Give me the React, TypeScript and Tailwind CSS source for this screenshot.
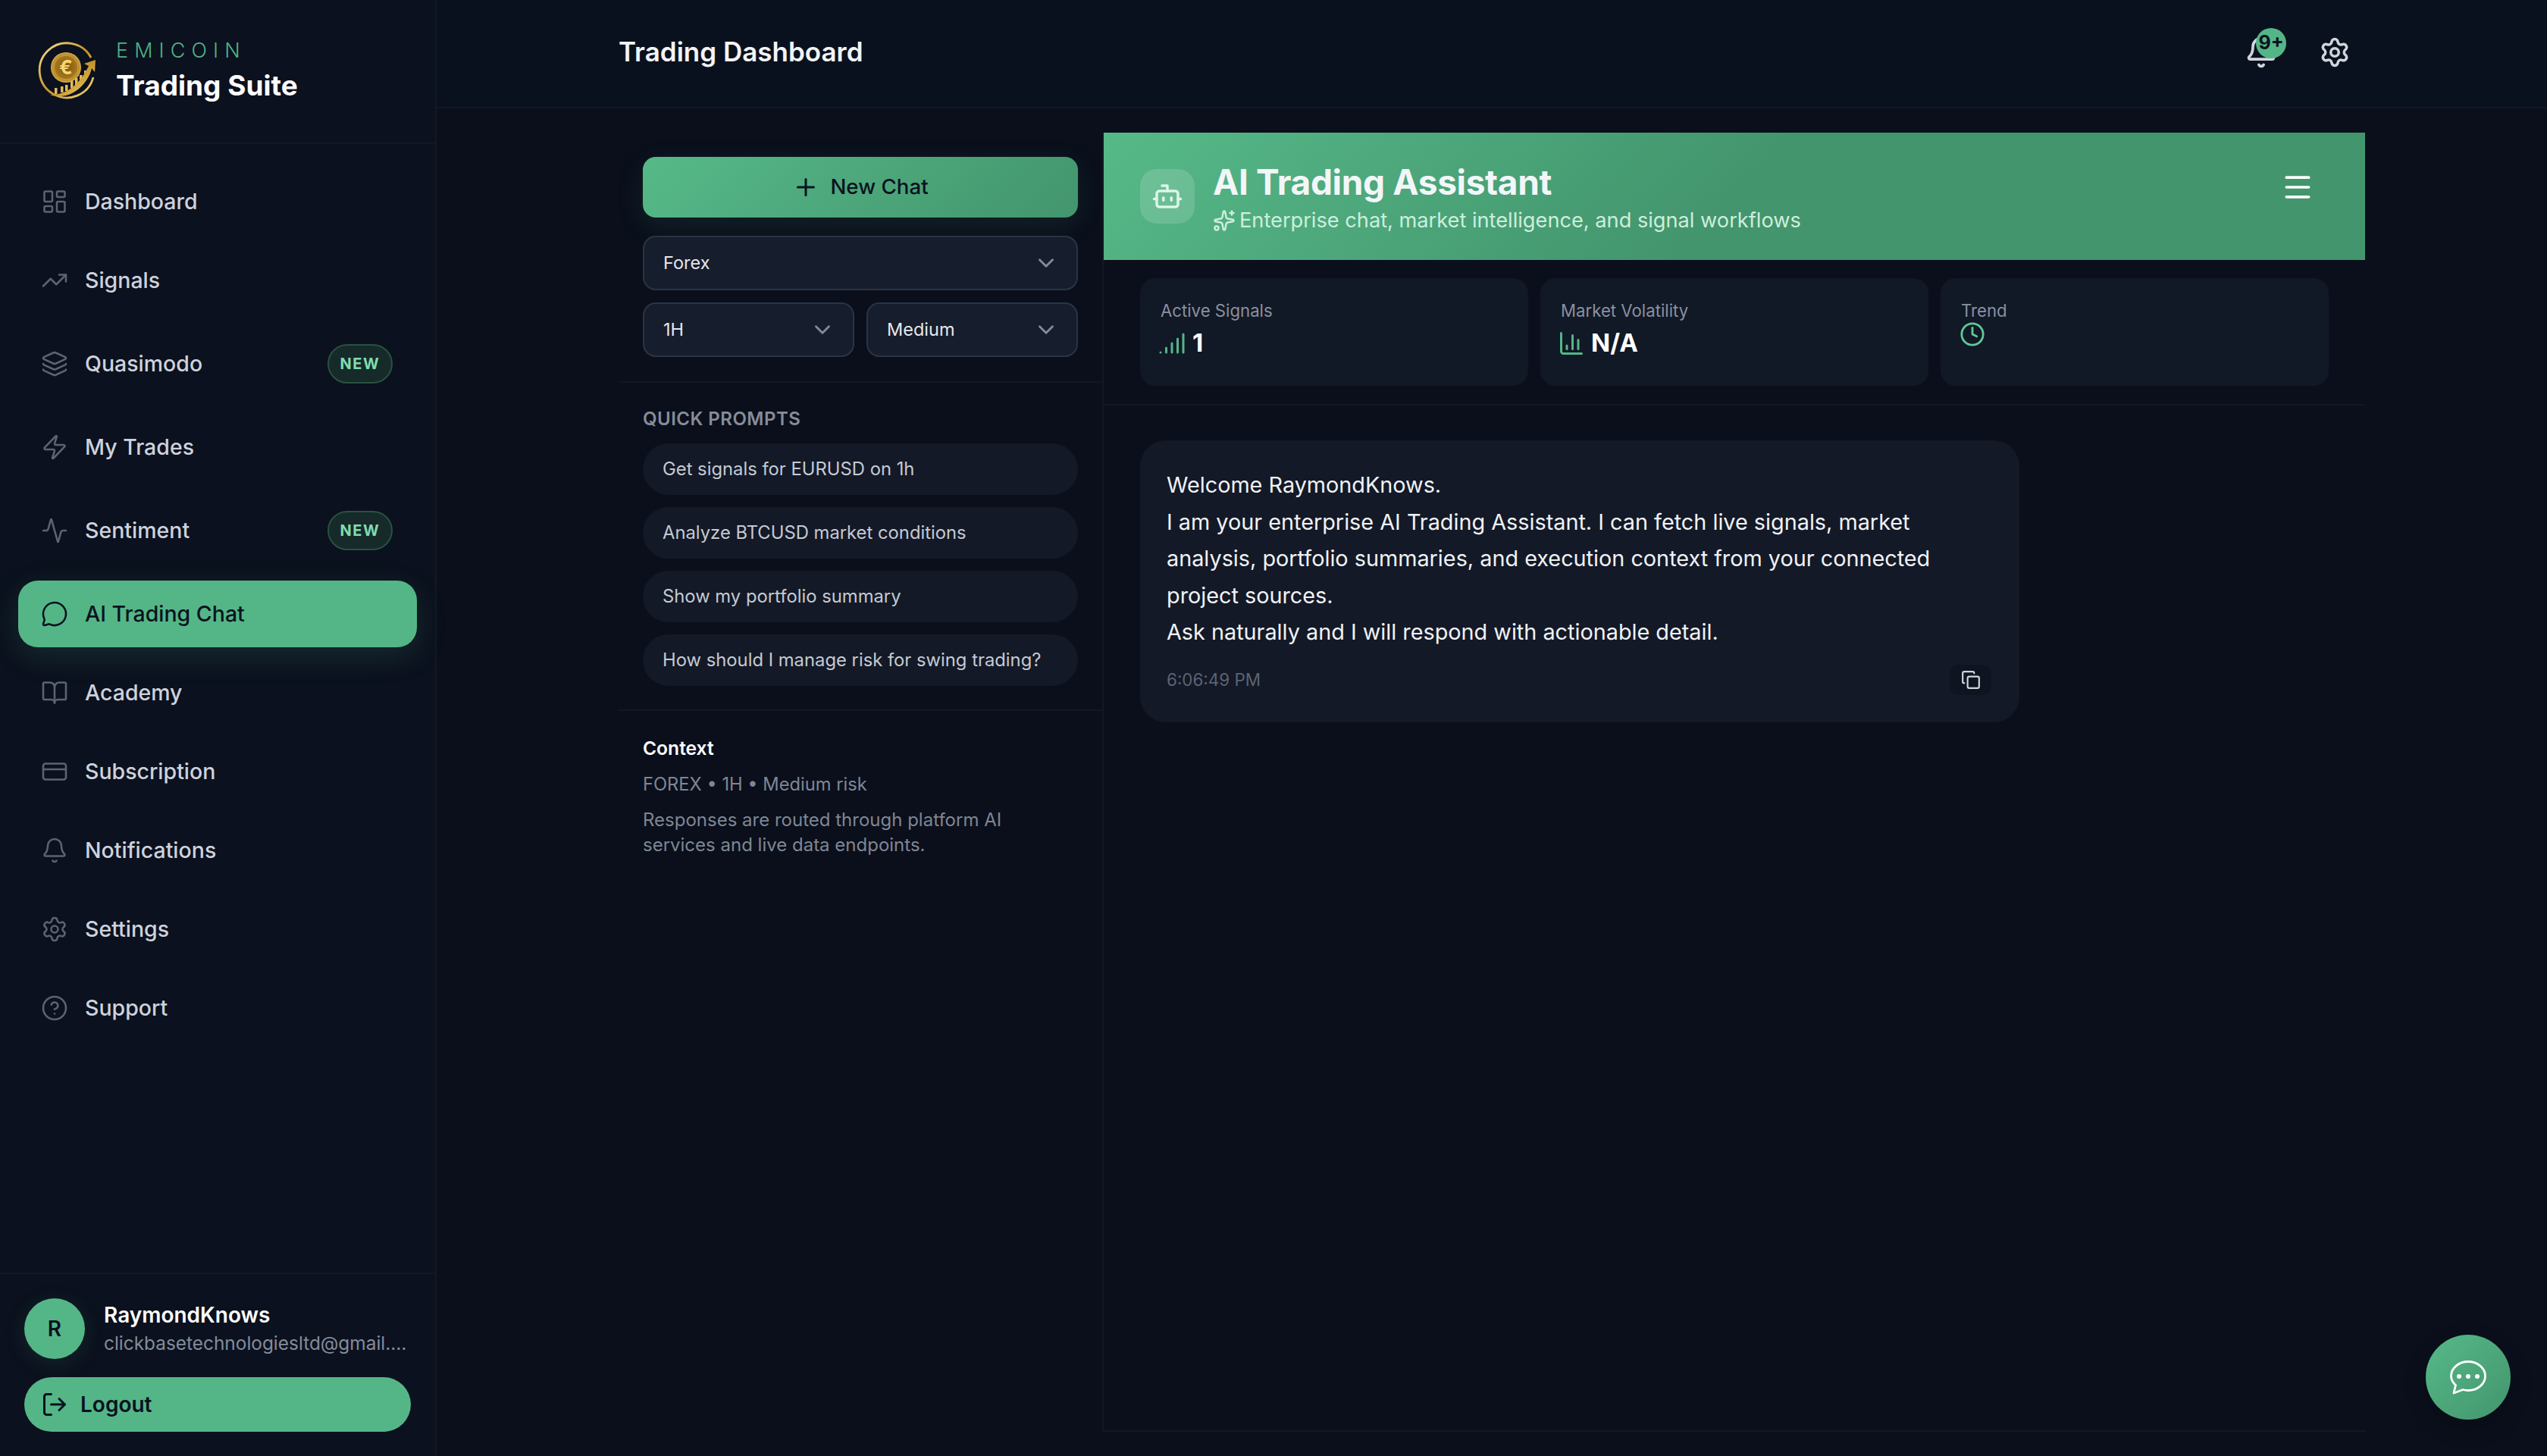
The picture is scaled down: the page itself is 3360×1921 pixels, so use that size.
import {
  BarChart3,
  Bell,
  BookOpen,
  Bot,
  ChevronDown,
  CircleHelp,
  Clock,
  Copy,
  CreditCard,
  Layers,
  LayoutDashboard,
  LogOut,
  Menu,
  MessageCircle,
  Plus,
  Settings,
  Signal,
  Sparkles,
  TrendingUp,
  Activity,
  Zap,
} from "lucide-react"

const navItems = [
  { label: "Dashboard", icon: LayoutDashboard },
  { label: "Signals", icon: TrendingUp },
  { label: "Quasimodo", icon: Layers, badge: true },
  { label: "My Trades", icon: Zap },
  { label: "Sentiment", icon: Activity, badge: true },
  { label: "AI Trading Chat", icon: MessageCircle, active: true },
  { label: "Academy", icon: BookOpen },
  { label: "Subscription", icon: CreditCard },
  { label: "Notifications", icon: Bell },
  { label: "Settings", icon: Settings },
  { label: "Support", icon: CircleHelp },
]

const prompts = [
  "Get signals for EURUSD on 1h",
  "Analyze BTCUSD market conditions",
  "Show my portfolio summary",
  "How should I manage risk for swing trading?",
]

function Logo() {
  return (
    <svg viewBox="0 0 84 84" className="w-[84px] h-[84px] shrink-0">
      <defs>
        <linearGradient id="gold" x1="0" y1="0" x2="1" y2="1">
          <stop offset="0" stopColor="#f8e08a" />
          <stop offset="0.5" stopColor="#c4952a" />
          <stop offset="1" stopColor="#f6d879" />
        </linearGradient>
        <radialGradient id="coin" cx="0.5" cy="0.5" r="0.55">
          <stop offset="0" stopColor="#7a5410" />
          <stop offset="0.7" stopColor="#a9791c" />
          <stop offset="1" stopColor="#ecc75e" />
        </radialGradient>
      </defs>
      <path d="M74 24A36 36 0 1 0 77 50" fill="none" stroke="url(#gold)" strokeWidth="2.8" />
      <circle cx="41" cy="37" r="20" fill="url(#coin)" />
      <circle cx="41" cy="37" r="16" fill="none" stroke="#d9ae42" strokeWidth="0.8" />
      <text x="41" y="46" textAnchor="middle" fontSize="26" fontWeight="700" fill="#f6d873" fontFamily="Inter, sans-serif">
        €
      </text>
      <g fill="#e3bb55">
        <rect x="26" y="64" width="3.5" height="8" />
        <rect x="34" y="62" width="3.5" height="8" />
        <rect x="40" y="60" width="3.5" height="8" />
        <rect x="47" y="55" width="3.5" height="9" />
        <rect x="53" y="51" width="3.5" height="10" />
        <rect x="59" y="47" width="3.5" height="10" />
        <rect x="65" y="41" width="3.5" height="11" />
      </g>
      <path d="M20 73C42 74 60 58 71 35L65 32L80 27L79 43L75 38C70 60 46 82 20 73Z" fill="url(#gold)" />
    </svg>
  )
}

function Sidebar() {
  return (
    <aside className="w-[576px] shrink-0 flex flex-col border-r-2 border-[#121826] bg-[#0b111e]">
      <div className="h-[190px] shrink-0 flex items-center pl-[46px] gap-[23px] border-b-2 border-[#121826]">
        <Logo />
        <div className="flex flex-col">
          <span className="text-[27px] leading-[36px] font-light tracking-[0.3em] text-[#4fb384]">EMICOIN</span>
          <span className="mt-[2px] text-[37px] leading-[52px] font-bold text-white">Trading Suite</span>
        </div>
      </div>

      <nav className="flex flex-col gap-[16px] px-[24px] pt-[32px]">
        {navItems.map((item) => (
          <a
            key={item.label}
            className={
              item.active
                ? "flex items-center h-[88px] pl-[30px] pr-[32px] rounded-[26px] bg-[#54b687] text-[#0b1220] shadow-[0_12px_40px_rgba(84,182,135,0.16)]"
                : item.badge
                  ? "flex items-center h-[100px] pl-[30px] pr-[32px] rounded-[26px] text-[#ced2dd]"
                  : "flex items-center h-[88px] pl-[30px] pr-[32px] rounded-[26px] text-[#ced2dd]"
            }
          >
            <item.icon
              size={36}
              strokeWidth={1.7}
              className={item.active ? "shrink-0 text-[#0b1220]" : "shrink-0 text-[#5d6372]"}
            />
            <span className="ml-[22px] text-[28.5px] leading-[42px] font-medium">{item.label}</span>
            {item.badge && (
              <span className="ml-auto h-[52px] w-[86px] flex items-center justify-center rounded-full border-2 border-[#27523f] bg-[#172a2a] text-[20px] font-bold tracking-[0.08em] text-[#7fdcb0]">
                NEW
              </span>
            )}
          </a>
        ))}
      </nav>

      <div className="mt-auto border-t-2 border-[#121826] px-[32px] pt-[32px] pb-[32px]">
        <div className="flex items-center gap-[25px]">
          <div className="w-[80px] h-[80px] shrink-0 rounded-full bg-[#54b687] flex items-center justify-center text-[28px] font-semibold text-[#0b1220] shadow-[0_6px_30px_rgba(84,182,135,0.12)]">
            R
          </div>
          <div className="min-w-0 w-[402px]">
            <div className="text-[28px] leading-[38px] font-semibold text-white">RaymondKnows</div>
            <div className="text-[24.4px] leading-[36px] text-[#858b9b] truncate">
              clickbasetechnologiesltd@gmail.com
            </div>
          </div>
        </div>
        <button className="mt-[24px] w-[510px] h-[72px] rounded-full bg-[#54b687] flex items-center pl-[22px] gap-[16px] text-[#0b1220] text-[28px] font-semibold">
          <LogOut size={36} strokeWidth={2} />
          Logout
        </button>
      </div>
    </aside>
  )
}

function SelectBox({ label, className }: { label: string; className: string }) {
  return (
    <div
      className={
        "h-[72px] flex items-center justify-between pl-[25px] pr-[23px] rounded-[17px] border-2 border-[#2b3445] bg-[#161d2c] text-[23.5px] text-[#e5e7eb] " +
        className
      }
    >
      {label}
      <ChevronDown size={34} strokeWidth={2} className="text-[#858b97]" />
    </div>
  )
}

function ChatSidebar() {
  return (
    <div className="w-[640px] shrink-0 border-r-2 border-[#111726]">
      <div className="px-[32px] py-[32px] border-b-2 border-[#111726]">
        <button className="w-full h-[80px] rounded-[17px] bg-[linear-gradient(135deg,#56b988,#43956d)] flex items-center justify-center gap-[14px] text-[27.7px] font-medium text-[#0b1220] shadow-[0_10px_36px_rgba(84,182,135,0.12)]">
          <Plus size={36} strokeWidth={2} />
          New Chat
        </button>
        <SelectBox label="Forex" className="mt-[24px] w-full" />
        <div className="mt-[16px] flex gap-[16px]">
          <SelectBox label="1H" className="flex-1" />
          <SelectBox label="Medium" className="flex-1" />
        </div>
      </div>

      <div className="px-[32px] pt-[31px] pb-[31px] border-b-2 border-[#111726]">
        <div className="text-[24px] leading-[34px] font-semibold tracking-[0.02em] text-[#868c9a]">QUICK PROMPTS</div>
        <div className="mt-[15px] flex flex-col gap-[16px]">
          {prompts.map((p) => (
            <div
              key={p}
              className="h-[68px] flex items-center pl-[26px] rounded-full bg-[#131927] text-[23.8px] text-[#c5c9d2]"
            >
              {p}
            </div>
          ))}
        </div>
      </div>

      <div className="px-[32px] pt-[31px]">
        <div className="text-[24.6px] leading-[36px] font-semibold text-white">Context</div>
        <div className="mt-[12px] text-[23.7px] leading-[36px] text-[#7f8694]">FOREX • 1H • Medium risk</div>
        <div className="mt-[13px] text-[24px] leading-[32.5px] text-[#7f8694]">
          Responses are routed through platform AI services and live data endpoints.
        </div>
      </div>
    </div>
  )
}

function StatCard({ label, children }: { label: string; children?: React.ReactNode }) {
  return (
    <div className="h-[142px] rounded-[20px] bg-[#111826] px-[27px] pt-[26px]">
      <div className="text-[22.2px] leading-[34px] text-[#8a909e]">{label}</div>
      {children}
    </div>
  )
}

function ChatPanel() {
  return (
    <div className="flex-1 flex flex-col border-b-2 border-[#131927]">
      <div className="h-[168px] shrink-0 flex items-center px-[48px] bg-[linear-gradient(135deg,#56b988_0%,#43956d_50%,#43956d_100%)]">
        <div className="w-[72px] h-[72px] rounded-[22px] bg-white/15 flex items-center justify-center">
          <Bot size={42} strokeWidth={2} className="text-[#dcf6e9]" />
        </div>
        <div className="ml-[24px] mt-[6px]">
          <div className="text-[46px] leading-[56px] font-bold tracking-[-0.35px] text-[#f3f6f9]">
            AI Trading Assistant
          </div>
          <div className="mt-[2px] flex items-center gap-[5px] text-[27.2px] leading-[42px] text-[#cdeede]">
            <Sparkles size={30} strokeWidth={2} />
            Enterprise chat, market intelligence, and signal workflows
          </div>
        </div>
        <button className="ml-auto mr-[5px] self-start mt-[36px] w-[72px] h-[72px] flex items-center justify-center text-white">
          <Menu size={44} strokeWidth={2} />
        </button>
      </div>

      <div className="grid grid-cols-3 gap-[16px] px-[48px] py-[24px] border-b-2 border-[#111726]">
        <StatCard label="Active Signals">
          <div className="mt-[4px] h-[44px] flex items-center gap-[9px] text-[33px] font-bold text-white">
            <Signal size={36} strokeWidth={2} className="text-[#54b687] -ml-[3px]" />
            1
          </div>
        </StatCard>
        <StatCard label="Market Volatility">
          <div className="mt-[4px] h-[44px] flex items-center gap-[8px] text-[33px] font-bold text-white">
            <BarChart3 size={36} strokeWidth={2} className="text-[#54b687] -ml-[4px]" />
            N/A
          </div>
        </StatCard>
        <StatCard label="Trend">
          <Clock size={34} strokeWidth={2} className="-mt-[3px] -ml-[2px] text-[#5ec998]" />
        </StatCard>
      </div>

      <div className="pl-[48px] pt-[46px]">
        <div className="w-[1160px] rounded-[34px] bg-[#131927] pl-[35px] pr-[37px] pt-[35px] pb-[36px]">
          <div className="text-[28.8px] leading-[48.6px] text-[#f0f2f5]">
            <p>Welcome RaymondKnows.</p>
            <p>
              I am your enterprise AI Trading Assistant. I can fetch live signals, market analysis, portfolio summaries,
              and execution context from your connected project sources.
            </p>
            <p>Ask naturally and I will respond with actionable detail.</p>
          </div>
          <div className="mt-[18px] flex items-center justify-between">
            <span className="text-[22.4px] text-[#5d6372]">6:06:49 PM</span>
            <button className="w-[55px] h-[40px] rounded-[11px] bg-[#0e1420] flex items-center justify-center text-[#d1d5db]">
              <Copy size={26} strokeWidth={2} />
            </button>
          </div>
        </div>
      </div>
    </div>
  )
}

export default function App() {
  return (
    <div className="relative flex h-screen w-full overflow-hidden bg-[#0a0f1b] font-[Inter,sans-serif]">
      <Sidebar />
      <main className="flex-1 flex flex-col min-w-0">
        <header className="h-[143px] shrink-0 border-b-2 border-[#121826] bg-[#0a111e]">
          <div className="w-[2304px] h-full mx-auto flex items-center justify-between">
            <h1 className="text-[35px] font-semibold text-[#f3f4f6] -mt-[4px]">Trading Dashboard</h1>
            <div className="flex items-center gap-[15px] -mt-[3px]">
              <div className="relative w-[80px] h-[80px] flex items-center justify-center text-[#d1d5db] -translate-x-[2px]">
                <Bell size={44} strokeWidth={2} />
                <span className="absolute left-[33px] top-[8px] w-[40px] h-[40px] rounded-full bg-[#54b687] flex items-center justify-center text-[25px] font-bold text-[#0b1220]">
                  9+
                </span>
              </div>
              <div className="w-[80px] h-[80px] flex items-center justify-center text-[#d1d5db]">
                <Settings size={42} strokeWidth={2} />
              </div>
            </div>
          </div>
        </header>
        <div className="flex-1 min-h-0 w-[2304px] mx-auto flex pt-[32px] pb-[32px]">
          <ChatSidebar />
          <ChatPanel />
        </div>
      </main>
      <button className="absolute right-[48px] bottom-[48px] w-[112px] h-[112px] rounded-full bg-[linear-gradient(135deg,#56b988,#43956d)] flex items-center justify-center shadow-[0_10px_30px_rgba(0,0,0,0.2)]">
        <svg viewBox="0 0 48 45" className="w-[48px] h-[45px]" fill="none">
          <path
            d="M24 1.5C36.5 1.5 46.5 10 46.5 20.5C46.5 31 36.5 39.5 24 39.5C21.5 39.5 19 39 17 38.5L5 43L7.5 32.5C3.5 29 1.5 25 1.5 20.5C1.5 10 11.5 1.5 24 1.5Z"
            stroke="white"
            strokeWidth="2.8"
            strokeLinejoin="round"
          />
          <circle cx="12" cy="21" r="3" fill="white" />
          <circle cx="24" cy="21" r="3" fill="white" />
          <circle cx="36" cy="21" r="3" fill="white" />
        </svg>
      </button>
    </div>
  )
}
